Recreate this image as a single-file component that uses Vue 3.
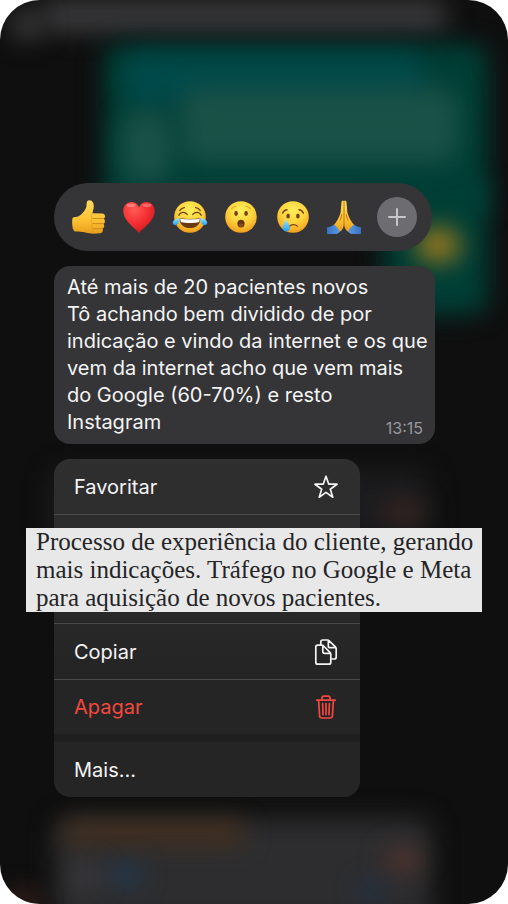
<template>
  <main class="screen">
    <div class="backdrop" aria-hidden="true">
      <span v-for="name in blurs" :key="name" class="blur" :class="name"></span>
    </div>

    <div class="content">
      <div class="reactions">
        <button class="reaction" type="button" aria-label="Curtir">
          <svg viewBox="0 0 36 36">
            <defs>
              <linearGradient id="skin" x1="0" y1="0" x2="0" y2="1">
                <stop offset="0" stop-color="#ffd95a" />
                <stop offset="0.6" stop-color="#fcc234" />
                <stop offset="1" stop-color="#e99b1b" />
              </linearGradient>
            </defs>
            <path
              d="M2.4 19.5C2.8 17.6 6.5 18.4 9 17C12.2 15.1 15.8 10.6 16.4 7.4C16.8 4.6 16.3 1.2 19.3 1.2C22.6 1.2 23.9 4.4 23.8 7.2C23.7 10 22.8 12.2 22.4 14.2L32.2 14.4C35.6 14.6 35.8 18.8 33.6 19.7C35.6 20.8 35.3 24.1 33.4 24.8C34.8 26 34.5 29 32.5 29.7C33.5 31.1 32.8 34 30 34.2C25.8 34.9 19.3 34.9 15.5 33.6C12.3 32.5 7.2 33.3 4.5 32.3C2.3 30.8 1.8 23.5 2.4 19.5Z"
              fill="url(#skin)"
            />
            <path
              d="M22.4 14.3C20.8 15.5 20.8 18.1 22.4 19.2C20.5 20.4 20.8 23.6 22.6 24.5C21 25.8 21.4 28.6 23.1 29.4C21.7 30.8 22.1 33.1 23.8 34"
              fill="none"
              stroke="#e0a02c"
              stroke-width="0.9"
            />
            <path
              d="M22.8 19.5H33.4M22.8 24.6H33.2M23.3 29.6H32.3"
              stroke="#d28a1c"
              stroke-width="1"
              stroke-linecap="round"
            />
          </svg>
        </button>

        <button class="reaction" type="button" aria-label="Amei">
          <svg viewBox="0 0 36 36">
            <defs>
              <radialGradient id="heart" cx="0.35" cy="0.25" r="0.8">
                <stop offset="0" stop-color="#ff5a55" />
                <stop offset="0.55" stop-color="#f42f32" />
                <stop offset="1" stop-color="#cf1620" />
              </radialGradient>
            </defs>
            <path
              d="M18 34C15.3 29.8 2.3 22.4 2.3 11.7C2.3 6.6 6 3 10.4 3C13.9 3 16.8 5.2 18 8.5C19.2 5.2 22.1 3 25.6 3C30 3 33.7 6.6 33.7 11.7C33.7 22.4 20.7 29.8 18 34Z"
              fill="url(#heart)"
            />
            <ellipse cx="10" cy="6.3" rx="4.6" ry="1.9" fill="#ff9c96" opacity="0.6" />
            <ellipse cx="26" cy="6.3" rx="4.6" ry="1.9" fill="#ff9c96" opacity="0.5" />
          </svg>
        </button>

        <button class="reaction" type="button" aria-label="Risada">
          <svg viewBox="0 0 36 36">
            <defs>
              <radialGradient id="face" cx="0.5" cy="0.3" r="0.72">
                <stop offset="0" stop-color="#fff05a" />
                <stop offset="0.55" stop-color="#fed23c" />
                <stop offset="1" stop-color="#f09a1c" />
              </radialGradient>
              <linearGradient id="tear" x1="0" y1="0" x2="0" y2="1">
                <stop offset="0" stop-color="#a6ecff" />
                <stop offset="1" stop-color="#1f9be8" />
              </linearGradient>
            </defs>
            <circle cx="18" cy="18" r="15.8" fill="url(#face)" />
            <path
              d="M6.8 16.2C8.2 12.7 12.8 12.4 15.2 15.4M20.8 15.4C23.2 12.4 27.8 12.7 29.2 16.2M7.8 11.4C9 9.6 10.4 8.8 12.4 8.6M23.6 8.6C25.6 8.8 27 9.6 28.2 11.4"
              fill="none"
              stroke="#70400f"
              stroke-width="1.4"
              stroke-linecap="round"
            />
            <path d="M7.4 18.9C14 20.2 22 20.2 28.6 18.9C28.3 25.7 24 29 18 29C12 29 7.7 25.7 7.4 18.9Z" fill="#6a3b12" />
            <path d="M8 19.5C14 20.7 22 20.7 28 19.5L27.1 22.9C22 24.2 14 24.2 8.9 22.9Z" fill="#fff" />
            <path
              d="M7.5 18.6C7.9 22.6 6.3 26.2 3.2 26.2C0.6 26.2 0 23.3 1.8 21.6C3.4 20.2 5.9 19.8 7.5 18.6ZM28.5 18.6C28.1 22.6 29.7 26.2 32.8 26.2C35.4 26.2 36 23.3 34.2 21.6C32.6 20.2 30.1 19.8 28.5 18.6Z"
              fill="url(#tear)"
            />
          </svg>
        </button>

        <button class="reaction" type="button" aria-label="Surpresa">
          <svg viewBox="0 0 36 36">
            <circle cx="18" cy="18" r="15.8" fill="url(#face)" />
            <ellipse cx="13.1" cy="14.5" rx="1.8" ry="2.4" fill="#70400f" />
            <ellipse cx="23.1" cy="14.5" rx="1.8" ry="2.4" fill="#70400f" />
            <path
              d="M8.8 9.6C10 8 11.5 7.4 13 7.3M23 7.3C24.6 7.4 26.1 8 27.3 9.6"
              fill="none"
              stroke="#d9a52a"
              stroke-width="1.1"
              stroke-linecap="round"
            />
            <ellipse cx="18" cy="24.6" rx="3.6" ry="3.9" fill="#643410" />
            <ellipse cx="18" cy="26.3" rx="2.6" ry="1.8" fill="#8b4a1c" />
          </svg>
        </button>

        <button class="reaction" type="button" aria-label="Triste">
          <svg viewBox="0 0 36 36">
            <circle cx="18" cy="18" r="15.8" fill="url(#face)" />
            <ellipse cx="13.1" cy="17" rx="1.8" ry="2.6" fill="#70400f" />
            <ellipse cx="22.9" cy="17" rx="1.8" ry="2.6" fill="#70400f" />
            <path
              d="M7.6 14.2C8.4 12.2 10 11 12 10.8M24 10.8C26 11 27.6 12.2 28.4 14.2M14.5 27.3C16.4 25.1 20.4 25 22.3 27.1"
              fill="none"
              stroke="#80480f"
              stroke-width="1.4"
              stroke-linecap="round"
            />
            <path
              d="M11.3 20C12.3 23.2 15 25.8 15 28.7C15 31 13.4 32.6 11.3 32.6C9.2 32.6 7.5 31 7.5 28.7C7.5 25.8 10.3 23.2 11.3 20Z"
              fill="url(#tear)"
            />
          </svg>
        </button>

        <button class="reaction" type="button" aria-label="Obrigado">
          <svg viewBox="0 0 36 36">
            <defs>
              <linearGradient id="sleeve" x1="0" y1="0" x2="1" y2="0">
                <stop offset="0" stop-color="#3572c4" />
                <stop offset="0.5" stop-color="#68a6ea" />
                <stop offset="1" stop-color="#3572c4" />
              </linearGradient>
            </defs>
            <path
              d="M18 2.2C16.7 0.8 15.5 1.8 15.4 4.2L14.6 13.5C13 18.5 11 23 7.6 26.2L13.2 33.2C16.2 31.6 18 28.5 18 24.5C18 28.5 19.8 31.6 22.8 33.2L28.4 26.2C25 23 23 18.5 21.4 13.5L20.6 4.2C20.5 1.8 19.3 0.8 18 2.2Z"
              fill="url(#skin)"
            />
            <path
              d="M18 2.4V26M15.7 15C15.4 18 14.6 20 13.9 21.7M20.3 15C20.6 18 21.4 20 22.1 21.7"
              fill="none"
              stroke="#b96f14"
              stroke-width="0.9"
            />
            <path
              d="M1 28.6C3.6 28.2 6 27.4 8 25.6C10.2 27.5 12.4 29.6 14 32.2C13 33.6 12 34.5 10.8 35H1ZM35 28.6C32.4 28.2 30 27.4 28 25.6C25.8 27.5 23.6 29.6 22 32.2C23 33.6 24 34.5 25.2 35H35Z"
              fill="url(#sleeve)"
            />
          </svg>
        </button>

        <button class="more-reactions" type="button" aria-label="Mais reações">
          <svg viewBox="0 0 40 40">
            <path d="M20 12V28M12 20H28" stroke="#c7c7cb" stroke-width="2" stroke-linecap="round" />
          </svg>
        </button>
      </div>

      <article class="message">
        <p v-for="line in message" :key="line" class="message-line">{{ line }}</p>
        <div class="message-end">
          <p class="message-line">Instagram</p>
          <time class="message-time">13:15</time>
        </div>
      </article>

      <section class="menu-area">
        <div class="menu">
          <button class="menu-item" type="button">
            <span>Favoritar</span>
            <svg class="menu-icon" viewBox="0 0 28 28">
              <path d="M14 3.2L16.7 11.1L25 11.2L18.3 16.2L20.8 24.2L14 19.4L7.2 24.2L9.7 16.2L3 11.2L11.3 11.1Z" />
            </svg>
          </button>
          <div class="menu-covered"></div>
          <button class="menu-item" type="button">
            <span>Copiar</span>
            <svg class="menu-icon" viewBox="0 0 28 28">
              <path
                d="M3.8 9.2Q3.8 7.2 5.8 7.2H9.8Q10.8 7.2 11.6 8L18 14.4Q18.8 15.2 18.8 16.2V24.2Q18.8 26.2 16.8 26.2H5.8Q3.8 26.2 3.8 24.2ZM10.8 7.6V13.6Q10.8 15.4 12.6 15.4H18.4"
              />
              <path
                d="M8.8 7V4Q8.8 2 10.8 2H15.4Q16.4 2 17.2 2.8L23.4 8.8Q24.2 9.6 24.2 10.6V19Q24.2 21 22.2 21H19M16.3 2.4V7.9Q16.3 9.7 18.1 9.7H23.8"
              />
            </svg>
          </button>
          <button class="menu-item danger" type="button">
            <span>Apagar</span>
            <svg class="menu-icon" viewBox="0 0 28 28">
              <path
                d="M4.8 7.2H23.2M10 7V5Q10 3.2 11.8 3.2H16.2Q18 3.2 18 5V7M6.6 7.4L7.6 23Q7.8 25 9.8 25H18.2Q20.2 25 20.4 23L21.4 7.4M10.6 10.6L11 21.6M14 10.6V21.6M17.4 10.6L17 21.6"
              />
            </svg>
          </button>
          <div class="menu-gap"></div>
          <button class="menu-item" type="button">
            <span>Mais...</span>
          </button>
        </div>
        <p class="caption">{{ caption }}</p>
      </section>
    </div>
  </main>
</template>

<script setup>
const blurs = [
  "header",
  "avatar",
  "sent",
  "sent-tail",
  "quote",
  "sent-text",
  "sent-start",
  "sent-emoji",
  "received",
  "received-mark",
  "last",
  "last-name",
  "last-text",
  "last-link",
  "last-mark",
  "last-time",
  "corner",
];

const message = [
  "Até mais de 20 pacientes novos",
  "Tô achando bem dividido de por",
  "indicação e vindo da internet e os que",
  "vem da internet acho que vem mais",
  "do Google (60-70%) e resto",
];

const caption = [
  "Processo de experiência do cliente, gerando",
  "mais indicações. Tráfego no Google e Meta",
  "para aquisição de novos pacientes.",
].join("\n");
</script>

<style>
body {
  margin: 0;
  background: #fff;
}
</style>

<style scoped>
.screen {
  position: relative;
  box-sizing: border-box;
  min-height: 100vh;
  padding: 183px 26px 106px;
  overflow: hidden;
  border-radius: 40px;
  background: #0f0f0f;
  font-family: Inter, "Liberation Sans", sans-serif;
  color: #f4f4f5;
}

.backdrop {
  position: absolute;
  inset: 0;
}

.blur {
  position: absolute;
  border-radius: 16px;
  filter: blur(12px);
}

.header {
  top: 0;
  left: 40px;
  right: 60px;
  height: 32px;
  background: #3a3a3c;
}

.avatar {
  top: 10px;
  left: 10px;
  width: 34px;
  height: 30px;
  background: #3a3a3b;
}

.sent {
  top: 44px;
  left: 104px;
  right: 20px;
  height: 170px;
  background: #003f36;
}

.sent-tail {
  top: 180px;
  left: 384px;
  right: 20px;
  height: 134px;
  background: #003f36;
}

.quote {
  top: 56px;
  left: 126px;
  right: 84px;
  height: 50px;
  background: #004a4b;
}

.sent-text {
  top: 88px;
  left: 180px;
  right: 50px;
  height: 74px;
  background: #1a5147;
}

.sent-start {
  top: 112px;
  left: 122px;
  width: 50px;
  height: 70px;
  background: #1a5147;
}

.sent-emoji {
  top: 228px;
  left: 416px;
  width: 44px;
  height: 34px;
  background: #94781f;
}

.received {
  top: 470px;
  left: 50px;
  right: 78px;
  height: 70px;
  background: #1c1c1e;
}

.received-mark {
  top: 502px;
  left: 384px;
  width: 40px;
  height: 20px;
  background: #3d2722;
}

.last {
  top: 818px;
  left: 54px;
  right: 76px;
  bottom: -20px;
  background: #2d2d2f;
}

.last-name {
  top: 822px;
  left: 62px;
  width: 184px;
  height: 22px;
  background: #46301d;
}

.last-text {
  top: 864px;
  left: 72px;
  width: 30px;
  height: 24px;
  background: #3c3c3f;
}

.last-link {
  top: 862px;
  left: 110px;
  width: 32px;
  height: 24px;
  background: #233a50;
}

.last-mark {
  top: 848px;
  left: 384px;
  width: 38px;
  height: 24px;
  background: #50342e;
}

.last-time {
  top: 882px;
  left: 360px;
  width: 22px;
  height: 16px;
  background: #1c3450;
}

.corner {
  bottom: -8px;
  left: 6px;
  width: 34px;
  height: 20px;
  background: #40241b;
}

.content {
  position: relative;
  display: flex;
  flex-direction: column;
  gap: 15px;
}

button {
  margin: 0;
  padding: 0;
  border: 0;
  background: none;
  color: inherit;
  font: inherit;
  cursor: pointer;
}

svg {
  display: block;
  width: 100%;
  height: 100%;
}

.reactions {
  display: flex;
  align-items: center;
  justify-content: space-between;
  box-sizing: border-box;
  max-width: 378px;
  height: 68px;
  margin: 0 28px;
  padding: 0 15px 0 16px;
  border-radius: 34px;
  background: #353537;
}

.reaction {
  width: 36px;
  height: 36px;
}

.more-reactions {
  width: 40px;
  height: 40px;
  border-radius: 50%;
  background: #6c6c71;
}

.message {
  box-sizing: border-box;
  width: calc(100% - 75px);
  max-width: 381px;
  margin-left: 28px;
  padding: 8px 4px 8px 13px;
  border-radius: 16px;
  background: #353537;
}

.message-line {
  margin: 0;
  font-size: 20px;
  line-height: 27px;
}

.message-end {
  display: flex;
  align-items: flex-end;
  justify-content: space-between;
  padding-right: 8px;
}

.message-time {
  color: #98989d;
  font-size: 16px;
  line-height: 16px;
}

.menu-area {
  position: relative;
}

.menu {
  max-width: 306px;
  margin: 0 28px;
  overflow: hidden;
  border-radius: 16px;
  background: linear-gradient(#302f30, #2a2a2a 40%, #252525 60%);
}

.menu-item {
  display: flex;
  align-items: center;
  justify-content: space-between;
  box-sizing: border-box;
  width: 100%;
  height: 55px;
  padding: 0 20px;
  font-size: 20px;
  line-height: 24px;
}

.menu-covered {
  box-sizing: border-box;
  height: 110px;
  border-top: 1px solid #4a4a4a;
  border-bottom: 1px solid #4a4a4a;
}

.danger {
  border-top: 1px solid #4a4a4a;
  color: #f5483f;
}

.menu-icon {
  width: 28px;
  height: 28px;
  fill: none;
  stroke: currentColor;
  stroke-width: 1.7;
  stroke-linecap: round;
  stroke-linejoin: round;
}

.menu-gap {
  height: 8px;
  background: #1f1f1f;
}

.caption {
  position: absolute;
  top: 69px;
  left: 0;
  right: 0;
  box-sizing: border-box;
  margin: 0;
  padding: 0 0 0 10px;
  background: #e8e8e8;
  color: #242426;
  font-family: "Liberation Serif", serif;
  font-size: 25px;
  line-height: 28px;
  white-space: pre-line;
}
</style>
